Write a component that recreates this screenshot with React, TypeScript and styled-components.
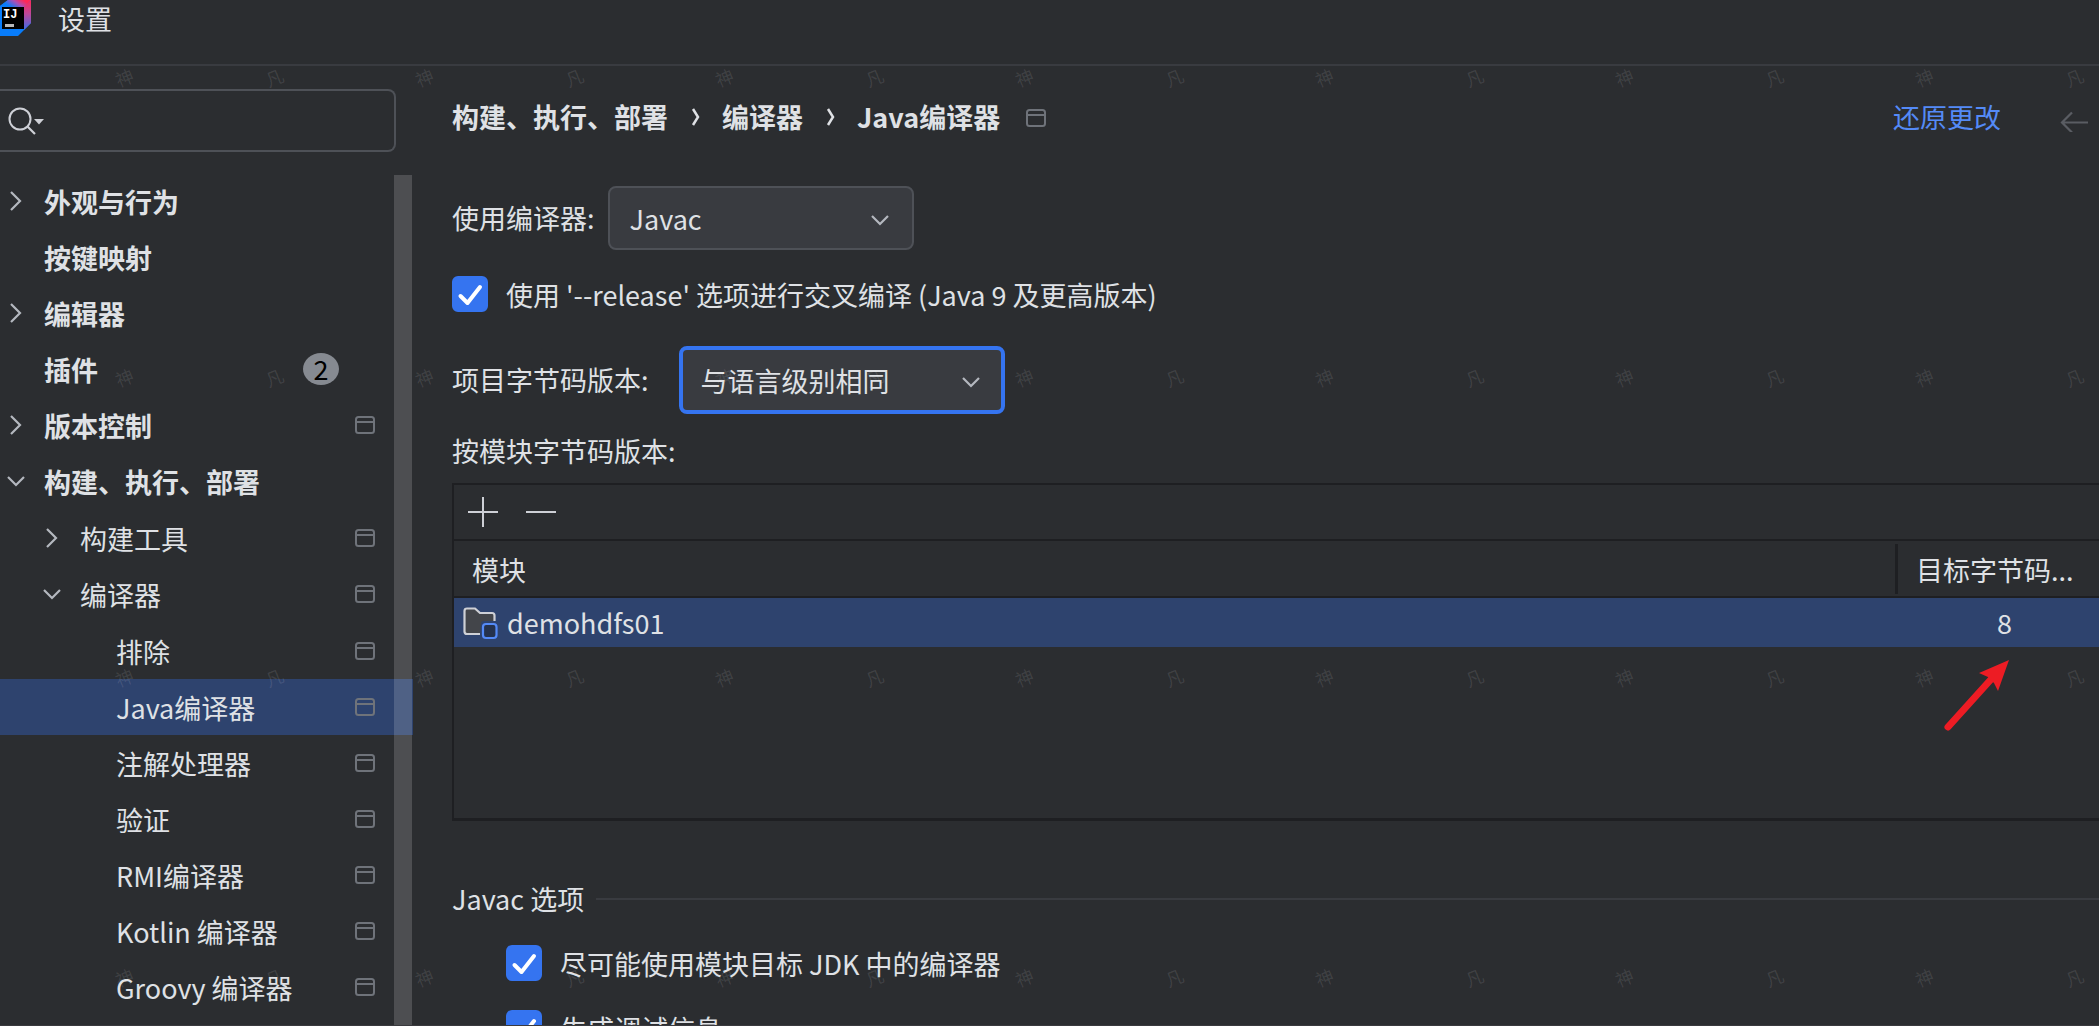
import React, { useState } from "react";
import styled, { createGlobalStyle } from "styled-components";

const color = {
  bg: "#2b2d30",
  control: "#393b40",
  border: "#4e5157",
  dark: "#1e1f22",
  text: "#dfe1e5",
  icon: "#b4b8bf",
  muted: "#6f737a",
  accent: "#3574f0",
  selection: "#2e436e",
  link: "#548af7",
};

const GlobalStyle = createGlobalStyle`
  *, *::before, *::after { box-sizing: border-box; }
  body {
    margin: 0;
    background: ${color.bg};
    color: ${color.text};
    font: 27px/40px "Noto Sans CJK SC", "Open Sans", sans-serif;
  }
  button, input, select { font: inherit; color: inherit; }
`;

const Window = styled.div`
  position: relative;
  display: flex;
  flex-direction: column;
  height: 100vh;
  overflow: hidden;
  background: ${color.bg};
  border-bottom: 1px solid #3a3a3e;
`;

const TitleBar = styled.header`
  display: flex;
  flex: none;
  align-items: flex-start;
  gap: 27px;
  height: 66px;
  border-bottom: 2px solid ${color.control};
`;

const Title = styled.h1`
  margin: 0;
  font-size: 27px;
  font-weight: 400;
  line-height: 38px;
`;

const Body = styled.div`
  display: flex;
  flex: 1;
  min-height: 0;
`;

const Sidebar = styled.aside`
  position: relative;
  display: flex;
  flex: none;
  flex-direction: column;
  gap: 21px;
  width: 413px;
  padding-top: 23px;
`;

const SearchBox = styled.div`
  display: flex;
  flex: none;
  align-items: center;
  gap: 8px;
  width: 396px;
  height: 63px;
  padding-left: 8px;
  border: 2px solid ${color.border};
  border-left: 0;
  border-radius: 0 8px 8px 0;
`;

const SearchInput = styled.input`
  flex: 1;
  min-width: 0;
  border: 0;
  outline: 0;
  background: transparent;
`;

const Tree = styled.ul`
  margin: 0;
  padding: 0;
  list-style: none;
`;

const SubTree = styled(Tree)`
  margin-top: 1px;
`;

const TreeRow = styled.div<{ $level: number; $selected?: boolean }>`
  display: flex;
  align-items: center;
  height: 56px;
  padding-left: ${(p) => 4 + p.$level * 36}px;
  padding-right: 38px;
  background: ${(p) => (p.$selected ? color.selection : "transparent")};
  font-weight: ${(p) => (p.$level === 0 ? 700 : 400)};
`;

const Twisty = styled.span`
  display: flex;
  flex: none;
  width: 40px;
`;

const RowText = styled.span`
  flex: 1;
  padding-top: 2px;
  white-space: nowrap;
`;

const Badge = styled.span`
  display: flex;
  align-items: center;
  justify-content: center;
  width: 36px;
  height: 32px;
  margin-right: 36px;
  border-radius: 50%;
  background: #868a91;
  color: #000;
  font-weight: 400;
  line-height: 32px;
`;

const ScrollThumb = styled.div`
  position: absolute;
  top: 109px;
  right: 1px;
  bottom: 0;
  width: 18px;
  background: rgba(255, 255, 255, 0.16);
`;

const Main = styled.main`
  display: flex;
  flex: 1;
  flex-direction: column;
  min-width: 0;
  padding: 20px 0 0 39px;
`;

const PageHeader = styled.div`
  display: flex;
  flex: none;
  align-items: center;
  height: 62px;
  padding-right: 11px;
`;

const Crumbs = styled.nav`
  display: flex;
  flex: 1;
  align-items: center;
  font-weight: 700;
`;

const CrumbSeparator = styled.span`
  display: flex;
  justify-content: center;
  width: 54px;
`;

const CrumbIcon = styled.span`
  display: flex;
  padding-top: 2px;
  margin-left: 26px;
`;

const RevertLink = styled.a`
  margin-right: 59px;
  color: ${color.link};
  text-decoration: none;
`;

const IconButton = styled.button`
  display: flex;
  padding: 0;
  border: 0;
  background: transparent;
`;

const FieldRow = styled.div<{ $top: number; $gap: number }>`
  display: flex;
  flex: none;
  align-items: center;
  gap: ${(p) => p.$gap}px;
  margin-top: ${(p) => p.$top}px;
`;

const SelectWrap = styled.div<{ $width: number }>`
  display: grid;
  align-items: center;
  width: ${(p) => p.$width}px;
  & > * { grid-area: 1 / 1; }
  & > svg {
    justify-self: end;
    margin-top: 4px;
    margin-right: 22px;
    pointer-events: none;
  }
`;

const Select = styled.select<{ $focused?: boolean }>`
  width: 100%;
  height: ${(p) => (p.$focused ? 68 : 64)}px;
  padding: 2px 56px 0 ${(p) => (p.$focused ? 18 : 20)}px;
  border: ${(p) => (p.$focused ? `4px solid ${color.accent}` : `2px solid ${color.border}`)};
  border-radius: 8px;
  outline: 0;
  background: ${color.control};
  appearance: none;
`;

const CheckLabel = styled.label<{ $top: number; $indent?: number }>`
  display: flex;
  flex: none;
  align-items: center;
  gap: 18px;
  height: 36px;
  margin-top: ${(p) => p.$top}px;
  margin-left: ${(p) => p.$indent ?? 0}px;
  white-space: nowrap;
`;

const CheckText = styled.span`
  padding-top: 2px;
`;

const CheckBoxWrap = styled.span`
  display: grid;
  & > * { grid-area: 1 / 1; }
  & > svg { pointer-events: none; }
`;

const CheckInput = styled.input`
  width: 36px;
  height: 36px;
  margin: 0;
  border: 2px solid ${color.muted};
  border-radius: 6px;
  appearance: none;
  &:checked {
    border-color: ${color.accent};
    background: ${color.accent};
  }
`;

const Caption = styled.p`
  flex: none;
  margin: 17px 0 12px;
`;

const Panel = styled.section`
  flex: none;
  height: 338px;
  margin-right: -15px;
  border: 2px solid ${color.dark};
  border-bottom-width: 3px;
`;

const Toolbar = styled.div`
  display: flex;
  align-items: center;
  gap: 28px;
  height: 56px;
  padding-left: 14px;
  border-bottom: 2px solid ${color.dark};
`;

const ModuleTable = styled.table`
  width: 100%;
  border-collapse: collapse;
  table-layout: fixed;
`;

const TargetCol = styled.col`
  width: 217px;
`;

const HeadCell = styled.th`
  height: 56px;
  padding: 0;
  border-bottom: 2px solid ${color.dark};
  font-weight: 400;
  text-align: left;
`;

const HeadText = styled.span<{ $divided?: boolean }>`
  display: block;
  padding: 6px 0 4px 18px;
  border-left: ${(p) => (p.$divided ? `3px solid ${color.dark}` : "0")};
`;

const ModuleCell = styled.td`
  height: 50px;
  padding: 0 0 0 9px;
  background: ${color.selection};
`;

const TargetCell = styled(ModuleCell)`
  padding-left: 2px;
  text-align: center;
`;

const ModuleName = styled.span`
  display: flex;
  align-items: center;
  gap: 9px;
`;

const GroupTitle = styled.h2`
  display: flex;
  flex: none;
  align-items: center;
  gap: 12px;
  margin: 58px 0 0;
  font-size: 27px;
  font-weight: 400;
  line-height: 40px;
  &::after {
    flex: 1;
    height: 2px;
    background: ${color.control};
    content: "";
  }
`;

const Watermark = styled.div`
  position: absolute;
  inset: 0;
  display: grid;
  grid-template-columns: repeat(14, 150px);
  grid-auto-rows: 300px;
  padding: 65px 0 0 49px;
  overflow: hidden;
  color: rgba(255, 255, 255, 0.1);
  font-size: 18px;
  line-height: 24px;
  pointer-events: none;
`;

const Mark = styled.span`
  justify-self: center;
  align-self: start;
  transform: rotate(-22deg);
`;

const Pointer = styled.svg`
  position: absolute;
  top: 656px;
  right: 86px;
  pointer-events: none;
`;

function Logo() {
  return (
    <svg width="31" height="36" viewBox="0 0 31 36" aria-hidden="true">
      <defs>
        <linearGradient id="top" x1="0" y1="0.6" x2="1" y2="0.2">
          <stop offset="0.2" stopColor="#087cfa" />
          <stop offset="0.55" stopColor="#a84fb8" />
          <stop offset="0.85" stopColor="#fe2857" />
        </linearGradient>
        <linearGradient id="side" x1="0" y1="0" x2="0" y2="1">
          <stop offset="0" stopColor="#fe2857" />
          <stop offset="0.45" stopColor="#c04797" />
          <stop offset="1" stopColor="#3b6bea" />
        </linearGradient>
      </defs>
      <path d="M0 6 8 0H31V23L18 36H0Z" fill="#087cfa" />
      <path d="M0 6 8 0H31L24 8H0Z" fill="url(#top)" />
      <path d="M31 0V23L24 30V7Z" fill="url(#side)" />
      <rect x="2" y="7" width="22" height="22" fill="#000" />
      <text x="3" y="18" fill="#fff" fontFamily="Liberation Mono" fontSize="12" fontWeight="700">IJ</text>
      <rect x="5" y="24" width="9" height="3" fill="#b8b8b8" />
    </svg>
  );
}

function SearchIcon() {
  return (
    <svg width="40" height="32" viewBox="0 0 40 32" fill="none" aria-hidden="true">
      <circle cx="12" cy="14" r="10.5" stroke="#ced0d6" strokeWidth="2" />
      <path d="m19.500 21.500 7.500 7.500" stroke="#ced0d6" strokeWidth="2.200" />
      <path d="M26 14H36L31 19.500Z" fill="#ced0d6" />
    </svg>
  );
}

function Chevron({ open }: { open?: boolean }) {
  return (
    <svg width="24" height="24" viewBox="0 0 24 24" fill="none" aria-hidden="true">
      <path d={open ? "M4 8 12 16 20 8" : "M7 3 16 12 7 21"} stroke={color.icon} strokeWidth="2.200" />
    </svg>
  );
}

function ProjectIcon() {
  return (
    <svg width="20" height="18" viewBox="0 0 20 18" fill="none" stroke={color.muted} strokeWidth="2" aria-hidden="true">
      <rect x="1" y="1" width="18" height="16" rx="2.500" />
      <path d="M1 6H19" />
    </svg>
  );
}

function ModuleIcon() {
  return (
    <svg width="35" height="34" viewBox="0 0 35 34" fill="none" aria-hidden="true">
      <path
        d="M17 28H4Q1.500 28 1.500 25.500V5Q1.500 2.500 4 2.500H12L17 7H29Q31.500 7 31.500 9.500V15H21Q18 15 18 18Z"
        fill="#43454a"
      />
      <path
        d="M17 28H4Q1.500 28 1.500 25.500V5Q1.500 2.500 4 2.500H12L17 7H29Q31.500 7 31.500 9.500V15"
        stroke="#ced0d6"
        strokeWidth="2.200"
      />
      <rect x="20" y="18" width="13.500" height="14" rx="3" fill="#25324d" stroke={color.link} strokeWidth="2.200" />
    </svg>
  );
}

type Node = {
  name: string;
  open?: boolean;
  branch?: boolean;
  project?: boolean;
  badge?: number;
  selected?: boolean;
  children?: Node[];
};

const nodes: Node[] = [
  { name: "外观与行为", branch: true },
  { name: "按键映射" },
  { name: "编辑器", branch: true },
  { name: "插件", badge: 2 },
  { name: "版本控制", branch: true, project: true },
  {
    name: "构建、执行、部署",
    branch: true,
    open: true,
    children: [
      { name: "构建工具", branch: true, project: true },
      {
        name: "编译器",
        branch: true,
        open: true,
        project: true,
        children: [
          { name: "排除", project: true },
          { name: "Java编译器", project: true, selected: true },
          { name: "注解处理器", project: true },
          { name: "验证", project: true },
          { name: "RMI编译器", project: true },
          { name: "Kotlin 编译器", project: true },
          { name: "Groovy 编译器", project: true },
        ],
      },
    ],
  },
];

function TreeItem({ node, level }: { node: Node; level: number }) {
  return (
    <li>
      <TreeRow $level={level} $selected={node.selected}>
        <Twisty>{node.branch && <Chevron open={node.open} />}</Twisty>
        <RowText>{node.name}</RowText>
        {node.badge && <Badge>{node.badge}</Badge>}
        {node.project && <ProjectIcon />}
      </TreeRow>
      {node.children && (
        <SubTree>
          {node.children.map((child) => (
            <TreeItem key={child.name} node={child} level={level + 1} />
          ))}
        </SubTree>
      )}
    </li>
  );
}

function CheckOption({ text, top, indent }: { text: string; top: number; indent?: number }) {
  const [checked, setChecked] = useState(true);
  return (
    <CheckLabel $top={top} $indent={indent}>
      <CheckBoxWrap>
        <CheckInput type="checkbox" checked={checked} onChange={() => setChecked(!checked)} />
        {checked && (
          <svg width="36" height="36" viewBox="0 0 36 36" fill="none" aria-hidden="true">
            <path d="m8.500 20 7 7L28 11" stroke="#fff" strokeWidth="4" strokeLinecap="round" strokeLinejoin="round" />
          </svg>
        )}
      </CheckBoxWrap>
      <CheckText>{text}</CheckText>
    </CheckLabel>
  );
}

function Separator() {
  return (
    <CrumbSeparator>
      <svg width="9" height="18" viewBox="0 0 9 18" fill="none" aria-hidden="true">
        <path d="M2 1 7 9 2 17" stroke={color.text} strokeWidth="2.500" />
      </svg>
    </CrumbSeparator>
  );
}

export default function App() {
  return (
    <>
      <GlobalStyle />
      <Window>
        <TitleBar>
          <Logo />
          <Title>设置</Title>
        </TitleBar>
        <Body>
          <Sidebar>
            <SearchBox>
              <SearchIcon />
              <SearchInput type="text" aria-label="搜索" />
            </SearchBox>
            <Tree>
              {nodes.map((node) => (
                <TreeItem key={node.name} node={node} level={0} />
              ))}
            </Tree>
            <ScrollThumb />
          </Sidebar>
          <Main>
            <PageHeader>
              <Crumbs>
                <span>构建、执行、部署</span>
                <Separator />
                <span>编译器</span>
                <Separator />
                <span>Java编译器</span>
                <CrumbIcon>
                  <ProjectIcon />
                </CrumbIcon>
              </Crumbs>
              <RevertLink href="#revert">还原更改</RevertLink>
              <IconButton type="button" aria-label="后退">
                <svg width="28" height="30" viewBox="0 0 28 30" fill="none" aria-hidden="true">
                  <path d="M28 20.500H3M12 10.500 2 20.500 12 30.500" stroke="#5a5d63" strokeWidth="2.200" />
                </svg>
              </IconButton>
            </PageHeader>

            <FieldRow $top={38} $gap={13}>
              <label htmlFor="compiler">使用编译器:</label>
              <SelectWrap $width={306}>
                <Select id="compiler" defaultValue="javac">
                  <option value="javac">Javac</option>
                </Select>
                <Chevron open />
              </SelectWrap>
            </FieldRow>

            <CheckOption text="使用 '--release' 选项进行交叉编译 (Java 9 及更高版本)" top={26} />

            <FieldRow $top={34} $gap={30}>
              <label htmlFor="bytecode">项目字节码版本:</label>
              <SelectWrap $width={326}>
                <Select id="bytecode" defaultValue="same" $focused>
                  <option value="same">与语言级别相同</option>
                </Select>
                <Chevron open />
              </SelectWrap>
            </FieldRow>

            <Caption>按模块字节码版本:</Caption>

            <Panel>
              <Toolbar>
                <IconButton type="button" aria-label="添加">
                  <svg width="30" height="30" viewBox="0 0 30 30" aria-hidden="true">
                    <path d="M0 15H30M15 0V30" stroke="#ced0d6" strokeWidth="2" />
                  </svg>
                </IconButton>
                <IconButton type="button" aria-label="移除">
                  <svg width="30" height="30" viewBox="0 0 30 30" aria-hidden="true">
                    <path d="M0 15H30" stroke="#ced0d6" strokeWidth="2" />
                  </svg>
                </IconButton>
              </Toolbar>
              <ModuleTable>
                <colgroup>
                  <col />
                  <TargetCol />
                </colgroup>
                <thead>
                  <tr>
                    <HeadCell>
                      <HeadText>模块</HeadText>
                    </HeadCell>
                    <HeadCell>
                      <HeadText $divided>目标字节码...</HeadText>
                    </HeadCell>
                  </tr>
                </thead>
                <tbody>
                  <tr>
                    <ModuleCell>
                      <ModuleName>
                        <ModuleIcon />
                        demohdfs01
                      </ModuleName>
                    </ModuleCell>
                    <TargetCell>8</TargetCell>
                  </tr>
                </tbody>
              </ModuleTable>
            </Panel>

            <GroupTitle>Javac 选项</GroupTitle>
            <CheckOption text="尽可能使用模块目标 JDK 中的编译器" top={26} indent={54} />
            <CheckOption text="生成调试信息" top={29} indent={54} />
          </Main>
        </Body>

        <Pointer width="70" height="78" viewBox="0 0 70 78" aria-hidden="true">
          <path d="M5 71 51 20" stroke="#ed1c24" strokeWidth="7" strokeLinecap="round" />
          <path d="M66 4 36 17 45 21 51 27 55 35Z" fill="#ed1c24" />
        </Pointer>

        <Watermark aria-hidden="true">
          {Array.from({ length: 56 }, (_, i) => (
            <Mark key={i}>{i % 2 === 0 ? "神" : "凡"}</Mark>
          ))}
        </Watermark>
      </Window>
    </>
  );
}
